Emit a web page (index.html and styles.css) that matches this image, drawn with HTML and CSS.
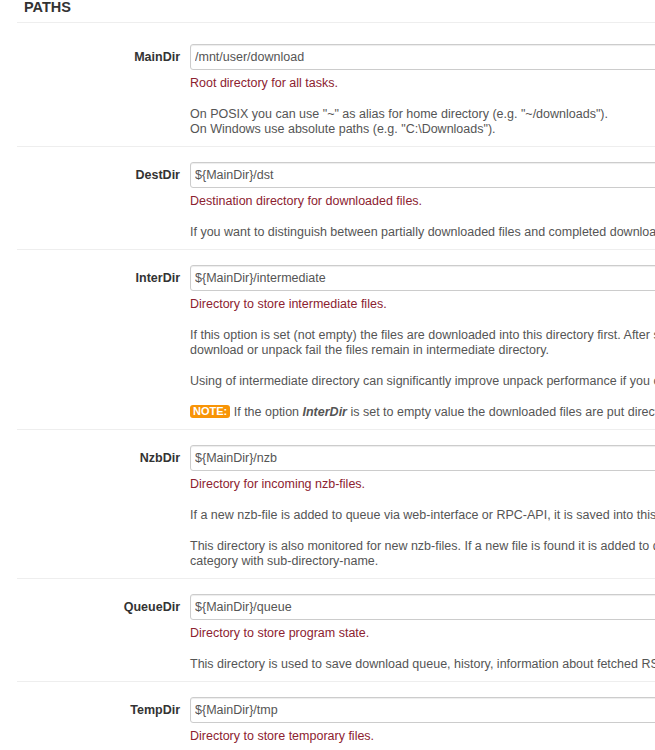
FILE: index.html
```html
<!DOCTYPE html>
<html>
  <head>
    <meta charset="UTF-8" />
    <link rel="stylesheet" href="styles.css">
  </head>
  <body>
    <div class="settings-page">
      <div class="section-title">PATHS</div>

      <div class="section-options">
        <div class="option">
          <label class="option-name">MainDir</label>
          <div class="option-controls">
            <input class="option-input" type="text" value="/mnt/user/download">
            <p class="option-summary">Root directory for all tasks.</p>
            <p class="option-help">On POSIX you can use "~" as alias for home directory (e.g. "~/downloads").<br>On Windows use absolute paths (e.g. "C:\Downloads").</p>
          </div>
        </div>

        <div class="option">
          <label class="option-name">DestDir</label>
          <div class="option-controls">
            <input class="option-input" type="text" value="${MainDir}/dst">
            <p class="option-summary">Destination directory for downloaded files.</p>
            <p class="option-help">If you want to distinguish between partially downloaded files and completed downloads, use also option <i>InterDir</i>.</p>
          </div>
        </div>

        <div class="option">
          <label class="option-name">InterDir</label>
          <div class="option-controls">
            <input class="option-input" type="text" value="${MainDir}/intermediate">
            <p class="option-summary">Directory to store intermediate files.</p>
            <p class="option-help">If this option is set (not empty) the files are downloaded into this directory first. After successful download of nzb-file (possibly after par-repair) the files are moved to destination directory (option <i>DestDir</i>). If<br>download or unpack fail the files remain in intermediate directory.</p>
            <p class="option-help">Using of intermediate directory can significantly improve unpack performance if you can put intermediate directory (option <i>InterDir</i>) and destination directory (option <i>DestDir</i>) on separate physical hard drives.</p>
            <p class="option-help"><span class="note-badge">NOTE:</span> If the option <b><i>InterDir</i></b> is set to empty value the downloaded files are put directly to destination directory (option <i>DestDir</i>).</p>
          </div>
        </div>

        <div class="option">
          <label class="option-name">NzbDir</label>
          <div class="option-controls">
            <input class="option-input" type="text" value="${MainDir}/nzb">
            <p class="option-summary">Directory for incoming nzb-files.</p>
            <p class="option-help">If a new nzb-file is added to queue via web-interface or RPC-API, it is saved into this directory and then processed by pre-processing script (option <i>ScanScript</i>).</p>
            <p class="option-help">This directory is also monitored for new nzb-files. If a new file is found it is added to queue. Directory can have sub-directories. A nzb-file queued from a subdirectory is automatically assigned to<br>category with sub-directory-name.</p>
          </div>
        </div>

        <div class="option">
          <label class="option-name">QueueDir</label>
          <div class="option-controls">
            <input class="option-input" type="text" value="${MainDir}/queue">
            <p class="option-summary">Directory to store program state.</p>
            <p class="option-help">This directory is used to save download queue, history, information about fetched RSS feeds, statistics, etc.</p>
          </div>
        </div>

        <div class="option">
          <label class="option-name">TempDir</label>
          <div class="option-controls">
            <input class="option-input" type="text" value="${MainDir}/tmp">
            <p class="option-summary">Directory to store temporary files.</p>
          </div>
        </div>
      </div>
    </div>
  </body>
</html>
```

FILE: styles.css
```css
* {
  margin: 0;
  padding: 0;
  box-sizing: border-box;
}

body {
  font-family: 'Liberation Sans', Arial, Helvetica, sans-serif;
  font-size: 12.5px;
  color: #333333;
  background-color: #ffffff;
  overflow: hidden;
}

.settings-page {
  width: 1100px;
  padding-left: 17px;
}

.section-title {
  font-size: 14.5px;
  font-weight: 700;
  line-height: 14px;
  color: #333333;
  padding: 0 0 8px 7px;
  border-bottom: 1px solid #eeeeee;
}

.section-options {
  padding-top: 6px;
}

.option {
  display: flex;
  gap: 10px;
  padding: 15px 0 9px;
  border-bottom: 1px solid #eeeeee;
}

.option-name {
  flex: 0 0 163px;
  text-align: right;
  font-weight: 700;
  line-height: 26px;
  color: #333333;
}

.option-controls {
  flex: 1;
  min-width: 0;
}

.option-input {
  display: block;
  width: 760px;
  height: 26px;
  padding: 0 4px;
  font-family: inherit;
  font-size: 12.5px;
  color: #555555;
  background-color: #ffffff;
  border: 1px solid #cccccc;
  border-radius: 3px;
  box-shadow: inset 0 1px 1px rgba(0, 0, 0, 0.075);
  outline: none;
}

.option-summary {
  margin-top: 6px;
  line-height: 15px;
  color: #8c2230;
  white-space: nowrap;
}

.option-help {
  margin-top: 16px;
  line-height: 15px;
  color: #555555;
  white-space: nowrap;
}

.note-badge {
  display: inline-block;
  padding: 0 3px;
  font-size: 11px;
  font-weight: 700;
  line-height: 13px;
  color: #ffffff;
  background-color: #f89406;
  border-radius: 3px;
  vertical-align: 1px;
}
```
